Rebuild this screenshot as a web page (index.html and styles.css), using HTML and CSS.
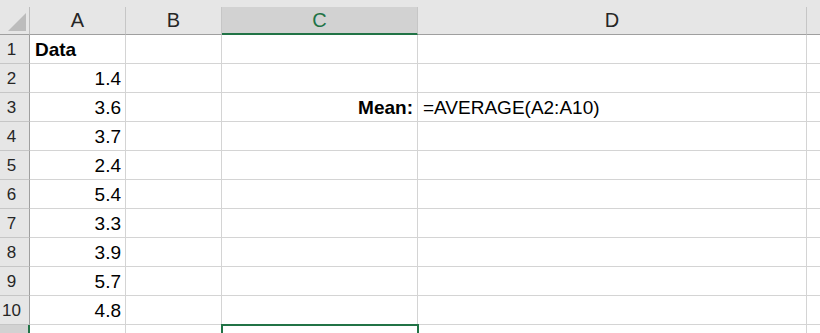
FILE: index.html
```html
<!DOCTYPE html>
<html>
    <head>
        <title>Sheet1</title>
        <meta charset="utf-8">
        <link rel="stylesheet" href="styles.css">
    </head>
    <body>
        <div class="topstrip"></div>
        <div class="sheet">
            <!-- column headers -->
            <div class="corner"><span class="tri"></span></div>
            <div class="colhead">A</div>
            <div class="colhead">B</div>
            <div class="colhead active">C</div>
            <div class="colhead">D</div>
            <div class="colhead last"></div>

            <div class="rowhead">1</div>
            <div class="cell bold">Data</div>
            <div class="cell"></div><div class="cell"></div><div class="cell"></div><div class="cell last"></div>

            <div class="rowhead">2</div>
            <div class="cell num">1.4</div>
            <div class="cell"></div><div class="cell"></div><div class="cell"></div><div class="cell last"></div>

            <div class="rowhead">3</div>
            <div class="cell num">3.6</div>
            <div class="cell"></div>
            <div class="cell num bold">Mean:</div>
            <div class="cell">=AVERAGE(A2:A10)</div>
            <div class="cell last"></div>

            <div class="rowhead">4</div>
            <div class="cell num">3.7</div>
            <div class="cell"></div><div class="cell"></div><div class="cell"></div><div class="cell last"></div>

            <div class="rowhead">5</div>
            <div class="cell num">2.4</div>
            <div class="cell"></div><div class="cell"></div><div class="cell"></div><div class="cell last"></div>

            <div class="rowhead">6</div>
            <div class="cell num">5.4</div>
            <div class="cell"></div><div class="cell"></div><div class="cell"></div><div class="cell last"></div>

            <div class="rowhead">7</div>
            <div class="cell num">3.3</div>
            <div class="cell"></div><div class="cell"></div><div class="cell"></div><div class="cell last"></div>

            <div class="rowhead">8</div>
            <div class="cell num">3.9</div>
            <div class="cell"></div><div class="cell"></div><div class="cell"></div><div class="cell last"></div>

            <div class="rowhead">9</div>
            <div class="cell num">5.7</div>
            <div class="cell"></div><div class="cell"></div><div class="cell"></div><div class="cell last"></div>

            <div class="rowhead">10</div>
            <div class="cell num">4.8</div>
            <div class="cell"></div><div class="cell"></div><div class="cell"></div><div class="cell last"></div>

            <!-- row 11, only its top edge is in view -->
            <div class="rowhead active"></div>
            <div class="cell"></div>
            <div class="cell"></div>
            <div class="cell selected"></div>
            <div class="cell"></div>
            <div class="cell last"></div>
        </div>
    </body>
</html>
```

FILE: styles.css
```css
body {
    margin: 0;
    background-color: #ffffff;
    overflow: hidden;
    font-family: "Liberation Sans", Arial, sans-serif;
}
.topstrip {
    height: 7px;
    background-color: #e6e6e6;
}
.sheet {
    display: grid;
    grid-template-columns: 30px 96px 96px 196px 389px 13px;
    grid-template-rows: 28px repeat(11, 29px);
    height: 326px;
    overflow: hidden;
}
.corner {
    background-color: #e6e6e6;
    border-right: 1px solid #bdbdbd;
    border-bottom: 1px solid #9f9f9f;
    display: flex;
    justify-content: flex-end;
    align-items: flex-end;
    padding: 0 3px 3px 0;
}
.tri {
    width: 18px;
    height: 18px;
    background-color: #bcbcbc;
    clip-path: polygon(100% 0, 100% 100%, 0 100%);
}
.colhead {
    background-color: #e6e6e6;
    border-right: 1px solid #c6c6c6;
    border-bottom: 1px solid #9f9f9f;
    color: #262626;
    font-size: 20px;
    display: flex;
    justify-content: center;
    align-items: flex-end;
    padding-bottom: 2px;
}
.colhead.active {
    background-color: #d2d2d2;
    color: #217346;
    border-bottom: 2px solid #217346;
    padding-bottom: 1px;
}
.colhead.last {
    border-right: none;
}
.rowhead {
    background-color: #e6e6e6;
    border-right: 1px solid #9f9f9f;
    border-bottom: 1px solid #c6c6c6;
    color: #262626;
    font-size: 17px;
    display: flex;
    justify-content: center;
    align-items: flex-end;
    padding: 0 6px 3px 0;
}
.rowhead.active {
    background-color: #d2d2d2;
    border-right: 2px solid #217346;
}
.cell {
    border-right: 1px solid #d4d4d4;
    border-bottom: 1px solid #d4d4d4;
    color: #000000;
    font-size: 19px;
    display: flex;
    align-items: flex-end;
    padding: 0 4px 2px 5px;
    white-space: nowrap;
}
.cell.last {
    border-right: none;
}
.num {
    justify-content: flex-end;
}
.bold {
    font-weight: bold;
}
.selected {
    outline: 2px solid #217346;
    outline-offset: -1px;
}
```
